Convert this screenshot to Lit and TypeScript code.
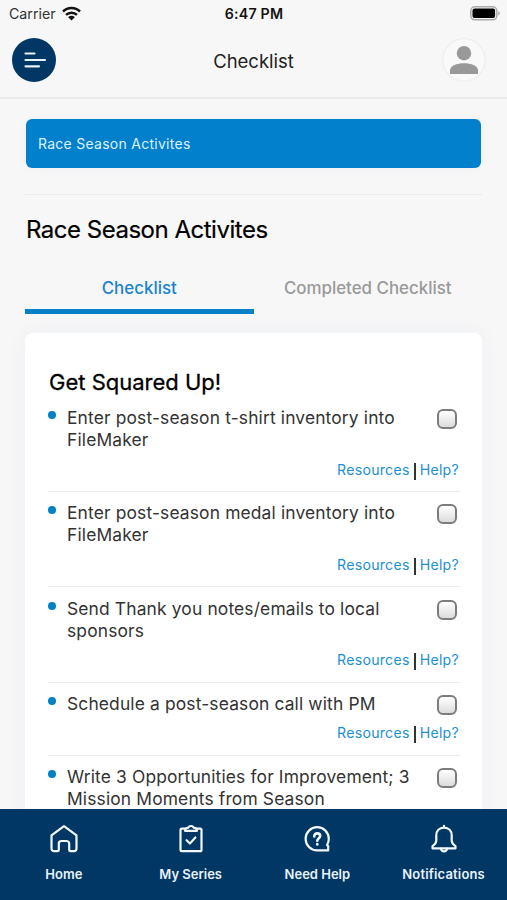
import { LitElement, html, css, svg, nothing } from "lit";
import { customElement, property } from "lit/decorators.js";

const TASKS = [
  { label: "Enter post-season t-shirt inventory into FileMaker", links: true },
  { label: "Enter post-season medal inventory into FileMaker", links: true },
  { label: "Send Thank you notes/emails to local sponsors", links: true },
  { label: "Schedule a post-season call with PM", links: true },
  { label: "Write 3 Opportunities for Improvement; 3 Mission Moments from Season", links: false },
];

const NAV = [
  {
    label: "Home",
    icon: svg`<path d="M15 2.200 2.500 11.400V24.600a2.600 2.600 0 0 0 2.600 2.600H8.500c.8 0 1.300-.5 1.300-1.300V19.600a2.600 2.600 0 0 1 2.600-2.600h5.200A2.600 2.600 0 0 1 20.200 19.600v6.300c0 .8.5 1.300 1.300 1.300H24.900a2.600 2.600 0 0 0 2.600-2.600V11.400Z"/>`,
  },
  {
    label: "My Series",
    icon: svg`<path d="M9.300 4.600H5.700a1.200 1.200 0 0 0-1.200 1.200V26a1.200 1.200 0 0 0 1.200 1.200H24.300a1.200 1.200 0 0 0 1.200-1.200V5.800a1.200 1.200 0 0 0-1.200-1.200H20.700"/><path d="M9 6.800c0-2 1.300-2.900 3.200-3.100.6-1.100 1.500-1.700 2.800-1.700s2.200.6 2.800 1.700c1.900.2 3.200 1.100 3.200 3.100Z"/><path d="m10.600 16.200 3.300 3.300 5.500-6"/>`,
  },
  {
    label: "Need Help",
    icon: svg`<path d="M26.800 14.800a11.600 11.600 0 1 0-11.600 11.600h11v-4.600l-1.200-.8a11.600 11.600 0 0 0 1.800-6.200Z"/><g stroke-width="2.600"><path d="M12.200 12.400c0-1.900 1.200-3 3-3s3 1.100 3 2.700c0 2-2.900 2.200-2.900 4.600"/><path d="M15.300 20.100v.3"/></g>`,
  },
  {
    label: "Notifications",
    icon: svg`<path d="M15 1.800v1.600M15 3.600c-4.700 0-7.700 3.300-7.700 7.800v5.200c0 2.300-1.500 4-3.800 5.600v2.100h23v-2.100c-2.300-1.600-3.800-3.300-3.800-5.600v-5.200c0-4.500-3-7.800-7.700-7.800Z"/><path d="M12 24.600c.3 2 1.400 2.800 3 2.800s2.700-.8 3-2.800"/>`,
  },
];

@customElement("task-row")
class TaskRow extends LitElement {
  @property() label = "";
  @property({ type: Boolean }) links = false;
  static styles = css`
    :host { display: block; border-bottom: 1px solid #e9e9ea; padding: 10.300px 0 13px; }
    .main { display: flex; align-items: flex-start; }
    .dot { flex: none; width: 8px; height: 8px; border-radius: 50%; background: #0480c6; margin: 4px 11px 0 0; }
    .label { flex: 1; font-size: 17.400px; line-height: 22px; color: #333; letter-spacing: 0.150px; }
    .box { flex: none; box-sizing: border-box; width: 20px; height: 20px; margin: 2px 3px 0 12px; border: 2px solid #7c7c7c; border-radius: 6px; background: linear-gradient(#fff, #dcdcdc); }
    .links { display: flex; justify-content: flex-end; align-items: center; height: 18px; margin-top: 9px; padding-right: 1px; font-size: 14.100px; color: #1d8fd2; letter-spacing: 0.280px; }
    .bar { width: 2px; height: 17px; background: #333; margin: 4px 4px 0 4px; }
  `;
  render() {
    return html`
      <div class="main">
        <span class="dot"></span><span class="label">${this.label}</span><span class="box"></span>
      </div>
      ${this.links
        ? html`<div class="links"><span>Resources</span><span class="bar"></span><span>Help?</span></div>`
        : nothing}
    `;
  }
}

@customElement("app-root")
class AppRoot extends LitElement {
  static styles = css`
    :host { display: flex; flex-direction: column; height: 900px; overflow: hidden; background: #f7f7f8; font-family: Inter, "Liberation Sans", sans-serif; color: #111; }
    * { box-sizing: border-box; }
    .status { display: grid; grid-template-columns: 1fr auto 1fr; align-items: center; height: 27px; padding: 0 7px 0 9px; flex: none; }
    .carrier { display: flex; align-items: center; gap: 6px; font-size: 14.200px; color: #333; }
    .clock { font-size: 14.200px; font-weight: 600; letter-spacing: 0.200px; margin-right: 1px; }
    .battery { justify-self: end; display: block; }
    .header { display: grid; grid-template-columns: 1fr auto 1fr; align-items: center; height: 72px; flex: none; padding: 0 20px 4px 12px; border-bottom: 2px solid #ebebec; }
    .menu, .avatar { width: 44px; height: 44px; display: block; }
    .avatar { justify-self: end; margin-right: 1px; }
    .title { font-size: 18.500px; color: #222; padding: 2px 0 0 8px; }
    .content { flex: 1; min-height: 0; overflow: hidden; padding: 20px 25px 0; }
    .banner { height: 49px; margin: 0 1px; background: #0280cb; border-radius: 6px; display: flex; align-items: center; padding-left: 12px; color: #dff1fb; font-size: 14px; letter-spacing: 0.270px; box-shadow: 0 0 12px rgba(40, 60, 140, 0.03); }
    .rule { height: 1px; background: #ebebec; margin-top: 26px; }
    .heading { font-size: 24px; line-height: 30px; letter-spacing: -0.490px; margin: 20px 0 0 1px; color: #000; -webkit-text-stroke: 0.200px #000; }
    .tabs { display: grid; grid-template-columns: 1fr 1fr; height: 69px; }
    .tab { display: flex; justify-content: center; align-items: center; padding-top: 22px; border-bottom: 5px solid transparent; font-size: 16.900px; font-weight: 500; color: #999; }
    .tab.active { color: #1984cc; border-color: #0480c6; }
    .card { margin-top: 19px; height: 600px; background: #fff; border-radius: 8px; padding: 36px 22px 0 23px; box-shadow: 0 0 22px rgba(40, 60, 120, 0.045); }
    .subhead { font-size: 22px; line-height: 27.700px; letter-spacing: 0; color: #000; padding-left: 1px; -webkit-text-stroke: 0.300px #000; }
    .nav { flex: none; height: 91px; background: #003764; display: grid; grid-template-columns: repeat(4, 1fr); color: #e9f2f9; }
    .item { display: flex; flex-direction: column; align-items: center; padding: 15px 0 0 1px; font-size: 13px; font-weight: 600; line-height: 16px; gap: 12px; }
    .item:last-child { padding-left: 0; letter-spacing: 0.160px; }
    .item svg { display: block; fill: none; stroke: #f2f9fe; stroke-width: 2.200; stroke-linecap: round; stroke-linejoin: round; }
  `;
  render() {
    return html`
      <div class="status">
        <div class="carrier">
          <span>Carrier</span>
          <svg width="19" height="15" viewBox="0 0 19 15">
            <g fill="none" stroke="#111" stroke-width="2.500">
              <path d="M1 5.500a12 12 0 0 1 17 0" /><path d="M4 8.900a7.800 7.800 0 0 1 11 0" />
            </g>
            <path d="M9.500 14.600 6.200 11.200a4.700 4.700 0 0 1 6.600 0Z" fill="#111" />
          </svg>
        </div>
        <span class="clock">6:47 PM</span>
        <svg class="battery" width="30" height="15" viewBox="0 0 30 15">
          <rect x="0.800" y="0.800" width="26" height="13" rx="4" fill="#f7f7f8" stroke="#aaa" stroke-width="1.500" />
          <rect x="2.500" y="2.500" width="22.600" height="9.600" rx="2" fill="#000" />
          <path d="M28.300 5v4.600c2-.8 2-3.800 0-4.600Z" fill="#aaa" />
        </svg>
      </div>
      <div class="header">
        <svg class="menu" viewBox="0 0 44 44">
          <circle cx="22" cy="22" r="22" fill="#003764" />
          <path d="M13.500 15.500h9M13.500 22h19.500M13.500 28.300h13.500" stroke="#e8f4fc" stroke-width="2.200" stroke-linecap="round" />
        </svg>
        <span class="title">Checklist</span>
        <svg class="avatar" viewBox="0 0 44 44">
          <circle cx="22" cy="22" r="21.300" fill="#f9f9fa" stroke="#eeeeef" stroke-width="1.300" />
          <circle cx="22" cy="15.200" r="7.200" fill="#999" />
          <path d="M8 36v-3.500c0-4.700 7-7.200 14-7.200s14 2.500 14 7.200V36Z" fill="#999" />
        </svg>
      </div>
      <div class="content">
        <div class="banner"><span>Race Season Activites</span></div>
        <div class="rule"></div>
        <div class="heading"><span>Race Season Activites</span></div>
        <div class="tabs">
          <div class="tab active"><span>Checklist</span></div>
          <div class="tab"><span>Completed Checklist</span></div>
        </div>
        <div class="card">
          <div class="subhead"><span>Get Squared Up!</span></div>
          ${TASKS.map((t) => html`<task-row .label=${t.label} .links=${t.links}></task-row>`)}
        </div>
      </div>
      <div class="nav">
        ${NAV.map((n) => html`<div class="item"><svg width="30" height="30" viewBox="0 0 30 30">${n.icon}</svg><span>${n.label}</span></div>`)}
      </div>
    `;
  }
}
